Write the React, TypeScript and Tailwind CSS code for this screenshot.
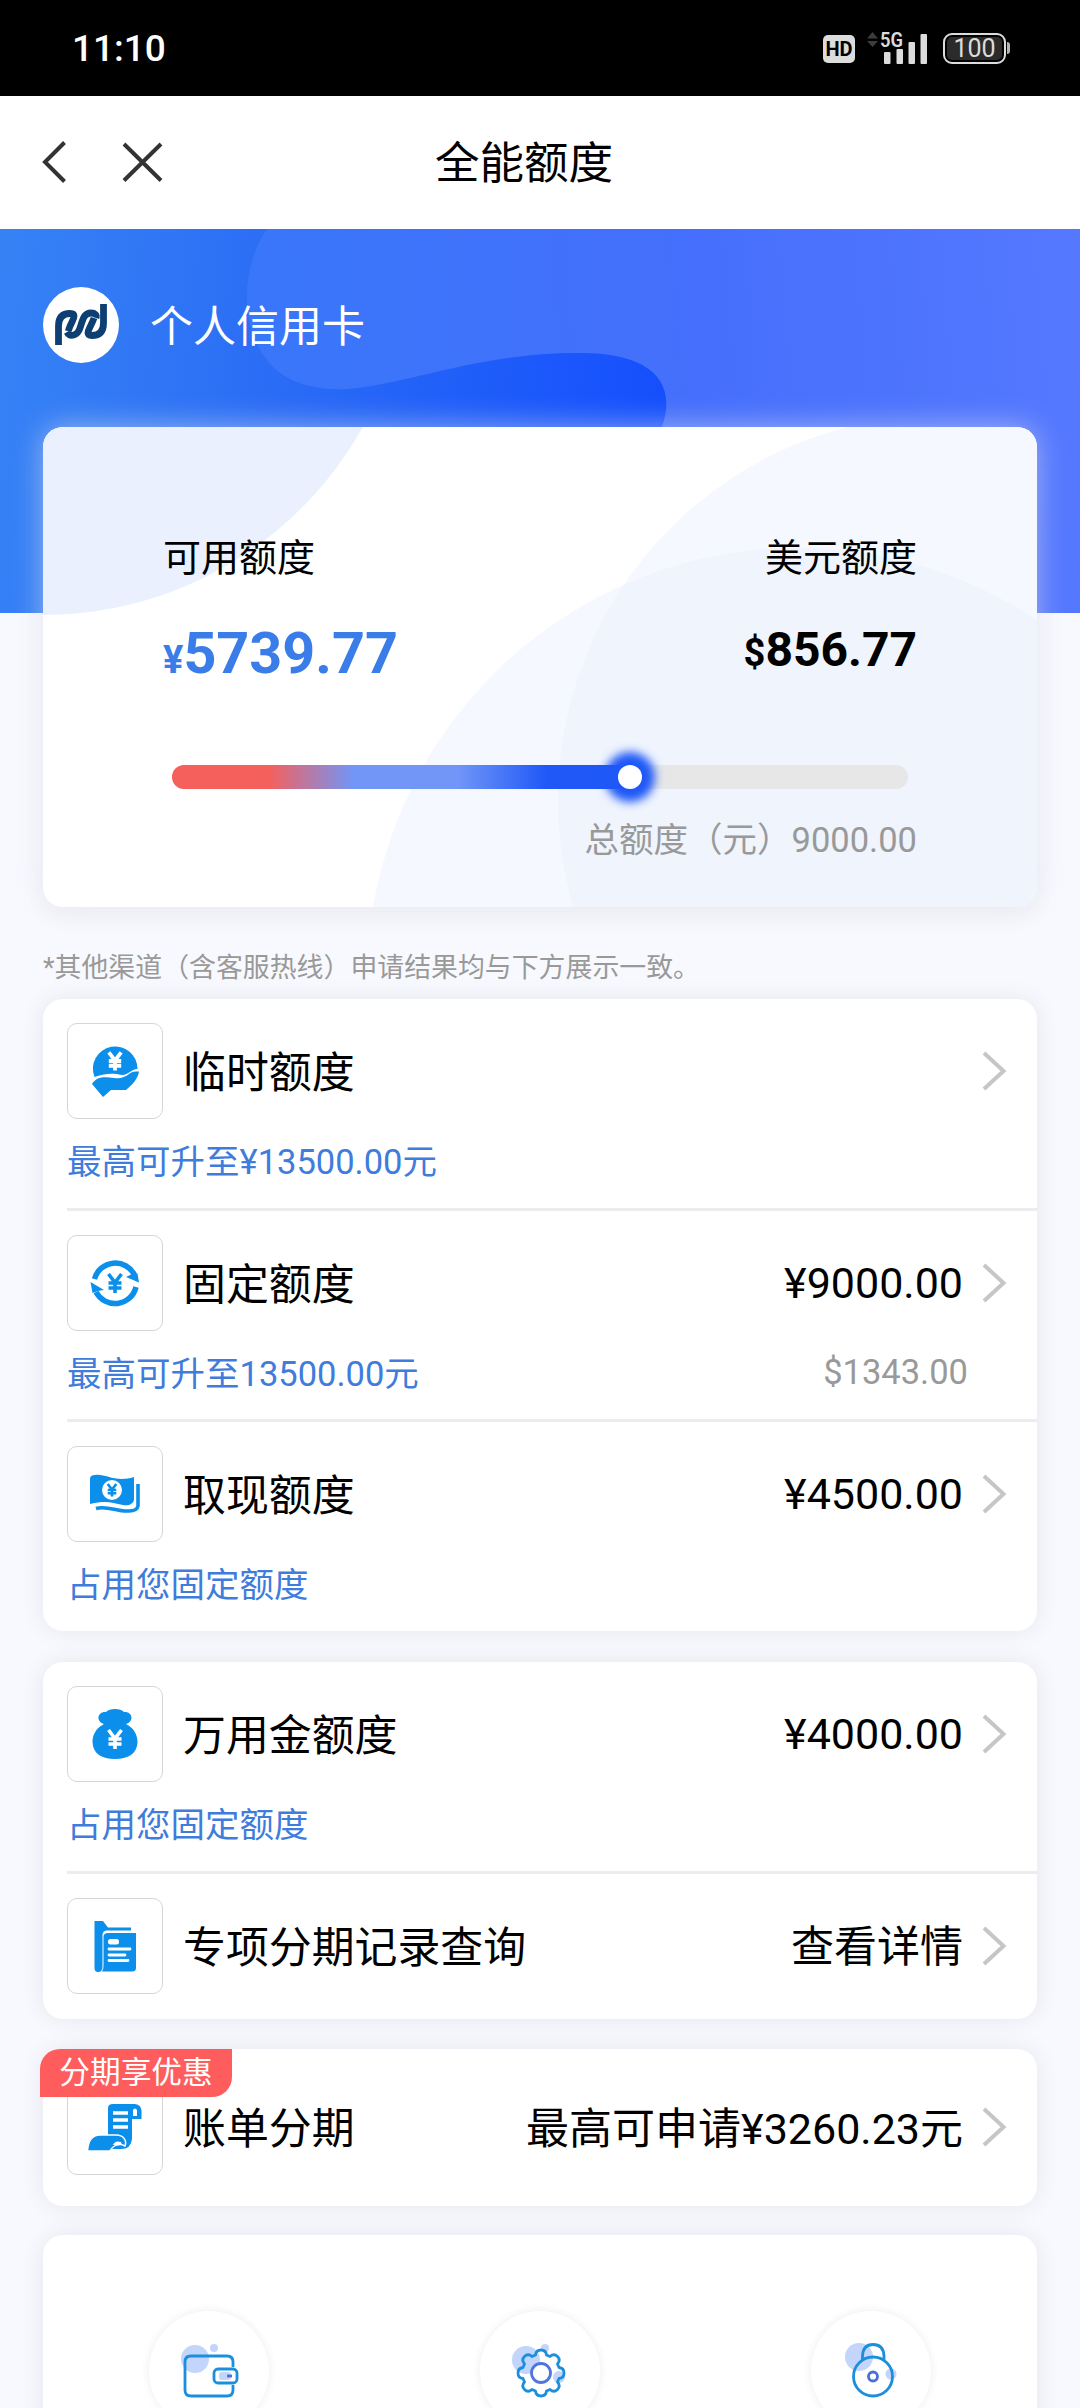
import React from "react";

function StatusBar() {
  return (
    <div className="flex h-24 items-center justify-between bg-black pl-[72px] pr-[70px] text-white">
      <span className="text-[37px] leading-none font-medium">11:10</span>
      <div className="flex items-center text-[#dcdcdc]">
        <span className="mt-[2px] flex h-7 w-8 items-center justify-center rounded-[5px] bg-[#dcdcdc] text-[20px] leading-none font-bold text-black">HD</span>
        <svg className="ml-[10px] overflow-visible" width="64" height="44" viewBox="866 25 64 44" fill="currentColor">
          <path d="M868 37.5 L873.5 31 L879 37.5Z M868 40 L873.5 46 L879 40Z" fill="#3c3c3c" />
          <rect x="885" y="51" width="6.5" height="12" rx="1" />
          <rect x="897.5" y="48" width="6.5" height="15" rx="1" />
          <rect x="909.5" y="41" width="6.5" height="22" rx="1" />
          <rect x="921.5" y="33" width="6.5" height="30" rx="1" />
          <text x="881" y="46" fontSize="20" fontWeight="600" textLength="23" lengthAdjust="spacingAndGlyphs">5G</text>
        </svg>
        <div className="ml-[14px] mt-px flex h-[31px] w-[63px] items-center justify-center rounded-[9px] border-2 border-[#dcdcdc] p-[2px]">
          <span className="flex h-full w-full items-center justify-center rounded-[5px] bg-[#2b2b2b] text-[25px] leading-none">100</span>
        </div>
        <span className="ml-[1px] h-3 w-[3px] rounded-r-sm bg-[#b5b5b5]" />
      </div>
    </div>
  );
}

function Header() {
  return (
    <div className="grid h-[133px] grid-cols-3 items-center bg-white px-10 text-black">
      <div className="-mt-px flex items-center gap-[53px] text-[#333]">
        <svg width="28" height="44" viewBox="40 140 28 44" fill="none" stroke="currentColor" strokeWidth="4">
          <path d="M64.500 142.500 L45 162 L64.500 181.500" />
        </svg>
        <svg width="44" height="44" viewBox="121 140 44 44" fill="none" stroke="currentColor" strokeWidth="4">
          <path d="M124 144 L161 180.500 M161 144 L124 180.500" />
        </svg>
      </div>
      <h1 className="-ml-8 mt-1 text-center text-[44.5px] leading-none font-normal">全能额度</h1>
    </div>
  );
}

function BankLogo() {
  return (
    <svg width="76" height="76" viewBox="43 287 76 76">
      <circle cx="81" cy="325" r="38" fill="#fff" />
      <g fill="none" stroke="#0d3f72" strokeWidth="6.800">
        <path d="M58.500 345 V326 C58.500 317 63 313.500 70 313.500 C76 313.500 74 318 72 322 C70 326 69 328 68.500 331" />
        <path d="M67 332 C70 337.500 77.500 336 80 328 C83 319 84 313 91 313 C95 313 97 315 96 318" />
        <path d="M103.500 304 V323 C103.500 332 99 335.500 92 335.500 C86 335.500 88 331 90 327 C92 323 93 321 94 318" />
      </g>
    </svg>
  );
}

function HeroBackdrop() {
  return (
    <svg className="absolute inset-x-0 top-0" width="1080" height="384" viewBox="0 229 1080 384">
      <defs>
        <linearGradient id="sky" gradientUnits="userSpaceOnUse" x1="240" y1="400" x2="1080" y2="330">
          <stop offset="0" stopColor="#3877f9" />
          <stop offset="0.55" stopColor="#456ffc" />
          <stop offset="1" stopColor="#5578ff" />
        </linearGradient>
        <linearGradient id="wave" gradientUnits="userSpaceOnUse" x1="0" y1="340" x2="665" y2="400">
          <stop offset="0" stopColor="#3682f5" />
          <stop offset="0.4" stopColor="#2b6df5" />
          <stop offset="1" stopColor="#154ffd" />
        </linearGradient>
      </defs>
      <rect y="229" width="1080" height="384" fill="url(#sky)" />
      <path d="M0 229 H267 C245 260 238 315 262 353 C278 380 310 391 347 389 C410 384 480 352 583 353 C640 353 680 375 662 427 V613 H0Z" fill="url(#wave)" />
    </svg>
  );
}

function SummaryCard() {
  return (
    <section className="relative mt-[64px] h-[480px] overflow-hidden rounded-[20px] bg-white px-[120px]">
      <svg className="absolute inset-0" width="994" height="480" viewBox="43 427 994 480">
        <circle cx="43" cy="249" r="366" fill="#eaf0fe" />
        <circle cx="943" cy="800" r="385" fill="#f5f8fe" />
        <circle cx="798" cy="979" r="431" fill="#e6effc" fillOpacity="0.42" />
      </svg>
      <div className="relative pt-[105px]">
        <div className="flex justify-between text-[38px] leading-[52px] text-black">
          <span>可用额度</span>
          <span>美元额度</span>
        </div>
        <div className="mt-[35px] flex h-[72px] justify-between font-bold leading-[70px]">
          <span className="text-[57.500px] text-[#3a7ce8]"><span className="text-[38px]">¥</span>5739.77</span>
          <span className="-mt-[4px] text-[48px] text-black"><span className="text-[38px]">$</span>856.77</span>
        </div>
        <div className="relative mx-[9px] mt-[74px] h-6 rounded-full bg-[#e7e7e7]">
          <div className="h-6 w-[458px] rounded-full bg-[linear-gradient(90deg,#f6605c_0,#f6605c_96px,#7196f8_182px,#7196f8_285px,#1f58f7_375px,#1f58f7_100%)]" />
          <div className="absolute left-[446px] top-0 size-6 rounded-full bg-white shadow-[0_0_10px_13px_#1f58f7]" />
        </div>
        <div className="mt-[25px] text-right text-[34.5px] leading-[52px] text-[#999]">总额度（元）9000.00</div>
      </div>
    </section>
  );
}

const BLUE = "#0b8fea";

function Yuan({ x, y, s, color, w = 4 }: { x: number; y: number; s: number; color: string; w?: number }) {
  return (
    <path
      transform={`translate(${x} ${y}) scale(${s})`}
      d="M-6.500 -9 L0 -0.500 L6.500 -9 M0 -1 V10 M-6.500 0 H6.500 M-6.500 5 H6.500"
      fill="none"
      stroke={color}
      strokeWidth={w}
    />
  );
}

const icons = {
  hand: (
    <>
      <path d="M27.500 54 A22.300 22.300 0 1 1 70.500 46 C64 46 62 52 55 52 C46 50 39 50 27.500 54Z" fill={BLUE} />
      <path d="M25 61 C30 53 38 54 47 55 C54 56 58 54 62 51 C65 48.500 68 48.500 72 48.500 C71 56 65 62 59 67 H44 L36 74 L25 61Z" fill={BLUE} />
      <Yuan x={48} y={38} s={0.95} color="#fff" />
    </>
  ),
  cycle: (
    <>
      <path d="M27.500 44 A21.500 21.500 0 0 1 67.500 40" fill="none" stroke={BLUE} strokeWidth="5.500" />
      <path d="M69 52 A21.500 21.500 0 0 1 29 57" fill="none" stroke={BLUE} strokeWidth="5.500" />
      <path d="M59 42 L64 39.500 L70.500 38.500 L72 47.500Z M23.500 47 L37 55 L31 56 L25.500 58Z" fill={BLUE} />
      <Yuan x={48} y={48} s={1} color={BLUE} w={3.6} />
    </>
  ),
  cash: (
    <>
      <path d="M23 33 Q23 29 28 29 C38 27 48 37 67 31 V54 C66 58 62 60 56 59 C45 57 40 54 23 58Z" fill={BLUE} />
      <path d="M71 38 V60 Q70 65 62 65 C50 66 40 59 29 62.500" fill="none" stroke={BLUE} strokeWidth="3.600" />
      <circle cx="45" cy="44" r="10" fill="#fff" />
      <Yuan x={45} y={44} s={0.66} color={BLUE} />
    </>
  ),
  bag: (
    <>
      <path d="M37 38 C28 35 31 25 39 26 C42 22 54 22 57 26 C65 25 68 35 59 38 C67 42 70.500 49 70.500 56 C70 68 61 73 48 73 C35 73 26 68 25.500 56 C25.500 49 29 42 37 38Z" fill={BLUE} />
      <Yuan x={48} y={53} s={1} color="#fff" w={3.6} />
    </>
  ),
  folder: (
    <>
      <path d="M27.500 23 H36 L41 29.500 H64 V32.500 H41 C37 32.500 35.500 34 35.500 38 V69 C35.500 72 34 74 31 74 Q27.500 74 27.500 70Z" fill={BLUE} />
      <path d="M41 35 H69 V70 Q69 73.500 65 73.500 H35 Q36.500 72 36.500 68 V39 Q36.500 35 41 35Z" fill={BLUE} />
      <path d="M42 51 H63 M42 57 H58 M42 62.500 H61" stroke="#fff" strokeWidth="2.800" strokeLinecap="round" />
      <rect x="41" y="41" width="11" height="5.500" rx="2.500" fill="#fff" />
    </>
  ),
  bill: (
    <>
      <path d="M41 54 V29 Q41 25 46 25 H68 Q74.500 26 74.500 32 V40 H65 V60 Q64 70 54 70 H40 L41 54Z" fill={BLUE} />
      <path d="M46 34 H61 M46 41 H61 M46 48 H61" stroke="#fff" strokeWidth="3.600" />
      <path d="M66 37 V31 Q68 28 70 31 V37Z" fill="#fff" />
      <path d="M20.500 72 C21 63 25 56 33 56 H49 C57 56 60 62 58 67 C53 64 46 66 43 72Z" fill={BLUE} stroke="#fff" strokeWidth="1.500" />
      <path d="M46 66 Q48 61 54 63 L55 66Z" fill="#fff" />
    </>
  ),
};

type RowProps = {
  icon: keyof typeof icons;
  title: string;
  value?: string;
  sub?: string;
  subRight?: string;
  last?: boolean;
};

function Row({ icon, title, value, sub, subRight, last }: RowProps) {
  return (
    <div className={`ml-6 pr-[30px] pt-6 ${last ? "" : "border-b-[3px] border-[#ececee]"}`}>
      <div className="flex h-24 items-center">
        <div className="size-24 rounded-[10px] border border-[#d6d6d9] bg-white">
          <svg className="-m-px" width="96" height="96" viewBox="0 0 96 96">{icons[icon]}</svg>
        </div>
        <span className="ml-5 mt-[5px] text-[42.9px] leading-none text-black">{title}</span>
        <span className={`ml-auto text-[43px] leading-none text-black ${value?.startsWith("¥") ? "mt-px" : "mt-1"}`}>{value}</span>
        <svg className="ml-[19px]" width="25" height="42" viewBox="0 0 25 42" fill="none" stroke="#c6c6c6" strokeWidth="4">
          <path d="M2 3 L21.500 21 L2 39" />
        </svg>
      </div>
      {sub && (
        <div className="flex h-[88.500px] items-center justify-between pb-[2px] pr-[39px] text-[34.5px] leading-none">
          <span className="text-[#3f7cdc]">{sub}</span>
          <span className="pb-1 text-[#999]">{subRight}</span>
        </div>
      )}
    </div>
  );
}

function Card({ className, children }: { className: string; children: React.ReactNode }) {
  return <section className={`relative rounded-[20px] bg-white shadow-[0_0_24px_rgba(0,0,0,0.08)] ${className}`}>{children}</section>;
}

function Shortcut({ children }: { children: React.ReactNode }) {
  return (
    <div className="flex justify-center">
      <div className="size-[120px] shrink-0 rounded-full bg-white shadow-[0_0_8px_rgba(60,60,160,0.09)]">
        <svg width="120" height="120" viewBox="0 0 120 120" fill="none" stroke="#1b8fdc" strokeWidth="2.800">{children}</svg>
      </div>
    </div>
  );
}

export default function App() {
  return (
    <div className="h-[2408px] w-[1080px] overflow-hidden bg-[#f8f9fe] font-[Roboto,'Noto_Sans_CJK_SC',sans-serif]">
      <StatusBar />
      <Header />
      <main className="relative px-[43px]">
        <HeroBackdrop />
        <div className="relative flex items-center gap-[31px] pt-[58px] text-[43px] leading-none text-white">
          <BankLogo />
          <span className="mt-1">个人信用卡</span>
        </div>
        <div className="relative rounded-[20px] [&>section]:shadow-[0_0_30px_rgba(225,228,240,0.6),0_8px_24px_rgba(0,0,0,0.04)]">
          <SummaryCard />
        </div>
        <p className="mt-[41px] h-[51px] text-[26.9px] leading-[40px] text-[#999]">*其他渠道（含客服热线）申请结果均与下方展示一致。</p>

        <Card className="h-[632px]">
          <Row icon="hand" title="临时额度" sub="最高可升至¥13500.00元" />
          <Row icon="cycle" title="固定额度" value="¥9000.00" sub="最高可升至13500.00元" subRight="$1343.00" />
          <Row icon="cash" title="取现额度" value="¥4500.00" sub="占用您固定额度" last />
        </Card>
        <Card className="mt-[31px] h-[357px]">
          <Row icon="bag" title="万用金额度" value="¥4000.00" sub="占用您固定额度" />
          <Row icon="folder" title="专项分期记录查询" value="查看详情" last />
        </Card>
        <Card className="mt-[30px] h-[157px] pt-[6px]">
          <Row icon="bill" title="账单分期" value="最高可申请¥3260.23元" last />
          <span className="absolute -left-[3px] top-0 flex h-12 w-48 items-center justify-center rounded-br-[20px] rounded-tl-[20px] bg-[#ff5d5d] pt-px text-[30.7px] leading-none text-white">分期享优惠</span>
        </Card>
        <Card className="mt-[29px] grid h-[300px] grid-cols-3 pt-[76px]">
          <Shortcut>
            <circle cx="46" cy="48" r="14" fill="#c3d5fa" stroke="none" />
            <circle cx="65" cy="37" r="4" fill="#c3d5fa" stroke="none" />
            <path d="M84 56 V51 Q84 45 78 45 H42 Q36 45 36 51 V79 Q36 85 42 85 H78 Q84 85 84 79 V74" />
            <rect x="65" y="58" width="23" height="14" rx="4" />
            <rect x="70" y="61" width="12" height="8" rx="3" fill="#c3d5fa" stroke="none" />
            <path d="M78 65 H83" stroke="#4a70d8" />
          </Shortcut>
          <Shortcut>
            <circle cx="46" cy="49" r="14" fill="#c3d5fa" stroke="none" />
            <circle cx="65" cy="37" r="4" fill="#c3d5fa" stroke="none" />
            <circle cx="79" cy="66" r="6" fill="#c3d5fa" stroke="none" />
            <path strokeLinejoin="round" d="M55.500 44 Q56 39 61 39 Q66 39 66.500 44 L70 45.500 Q74 42 77.500 45.500 Q81 49 77.500 53 L79 56.500 Q84 57 84 62 Q84 67 79 67.500 L77.500 71 Q81 75 77.500 78.500 Q74 82 70 78.500 L66.500 80 Q66 85 61 85 Q56 85 55.500 80 L52 78.500 Q48 82 44.500 78.500 Q41 75 44.500 71 L43 67.500 Q38 67 38 62 Q38 57 43 56.500 L44.500 53 Q41 49 44.500 45.500 Q48 42 52 45.500Z" />
            <circle cx="61" cy="62" r="9.500" fill="#fff" stroke="#5274de" />
          </Shortcut>
          <Shortcut>
            <circle cx="48" cy="46" r="14" fill="#c3d5fa" stroke="none" />
            <circle cx="80" cy="63" r="5.500" fill="#c3d5fa" stroke="none" />
            <path d="M51.500 49 V45 Q52 33.500 62 33.500 Q72.500 33.500 73 45 V49" />
            <circle cx="62" cy="65.500" r="19.500" />
            <circle cx="62" cy="65.500" r="4.500" stroke="#4a70d8" />
          </Shortcut>
        </Card>
      </main>
    </div>
  );
}
